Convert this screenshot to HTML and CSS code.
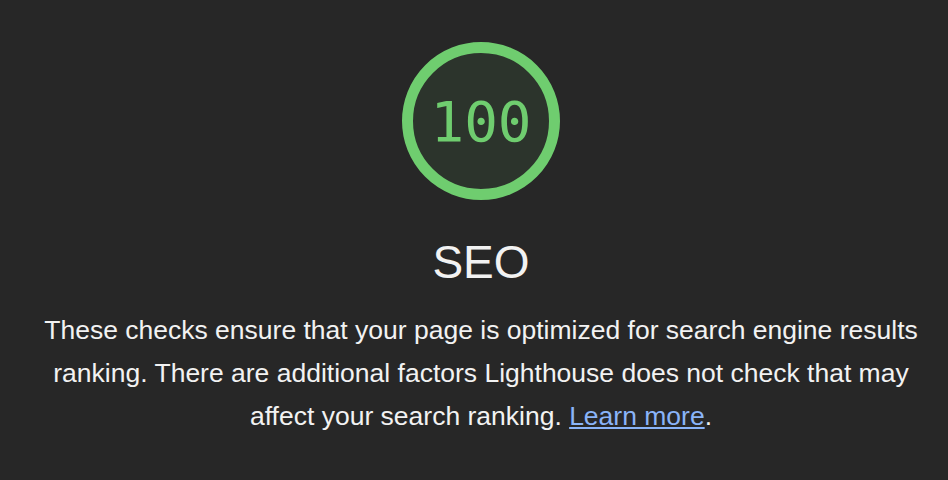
FILE: index.html
```html
<!DOCTYPE html>
<html>
<head>
<meta charset="utf-8">
<link rel="stylesheet" href="styles.css">
</head>
<body>
<div class="category">
  <div class="gauge">
    <svg class="gauge-svg" viewBox="0 0 158 158" width="158" height="158">
      <circle cx="79" cy="79" r="73.5" fill="#2c342c" stroke="#6fcd6f" stroke-width="11"/>
    </svg>
    <div class="gauge-pct">100</div>
  </div>
  <div class="title">SEO</div>
  <p class="desc">These checks ensure that your page is optimized for search engine results ranking. There are additional factors Lighthouse does not check that may affect your search ranking. <a href="#">Learn more</a>.</p>
</div>
</body>
</html>
```
FILE: styles.css
```css
html, body {
  margin: 0;
  padding: 0;
  background: #272727;
  width: 948px;
  height: 480px;
  overflow: hidden;
}
.category {
  display: flex;
  flex-direction: column;
  align-items: center;
  padding-top: 42px;
  padding-left: 14px;
  font-family: "Liberation Sans", Arial, sans-serif;
  color: #f2f2f2;
}
.gauge {
  position: relative;
  width: 158px;
  height: 158px;
}
.gauge-svg {
  display: block;
}
.gauge-pct {
  position: absolute;
  inset: 0;
  display: flex;
  align-items: center;
  justify-content: center;
  font-family: "DejaVu Sans Mono", monospace;
  font-variant-numeric: slashed-zero;
  font-size: 56px;
  color: #6fcd6f;
  padding-top: 0;
}
.title {
  margin-top: 34px;
  font-size: 46px;
  line-height: 56px;
}
.desc {
  margin: 19px 0 0;
  width: 910px;
  text-align: center;
  font-size: 26.5px;
  line-height: 43px;
}
.desc a {
  color: #8ab4f8;
  text-decoration: underline;
}
```
